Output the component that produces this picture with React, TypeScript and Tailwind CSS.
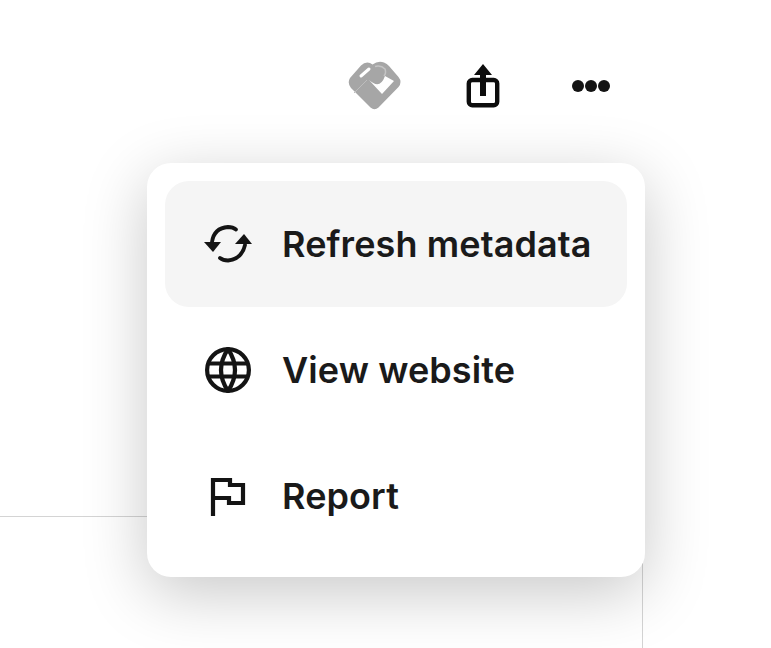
function Collection() {
  return (
    <svg width="54" height="50" viewBox="0 0 54 50" fill="none">
      <path
        d="M2 17 L13 4.5 Q17 0.5 22 2 L24.5 3.5 Q30 -0.5 36 1.5 Q39 2.5 41 5 L50.5 16 Q54.5 21 50.5 26 L30.5 46.5 Q26.5 50 22.5 46.5 L3 27 Q-1 22 2 17 Z"
        fill="#a6a6a6"
      />
      <path d="M13 15 L21 8" stroke="#ffffff" strokeWidth="3" strokeLinecap="round" />
      <path d="M21 19 Q32 29 37 15 L46 20 L34 33 Z" fill="#ffffff" />
      <path d="M27 5.5 Q33 4 37 8 Q38.5 12 36 15" stroke="#c4c4c4" strokeWidth="1.5" />
      <path d="M6 32 L19 19" stroke="#bdbdbd" strokeWidth="1" />
    </svg>
  );
}

function Share() {
  return (
    <svg width="34" height="44" viewBox="0 0 34 44" fill="none">
      <path d="M17 0 L26 11 L20 11 L20 32 L14 32 L14 11 L8 11 Z" fill="#0d0d0d" />
      <rect x="2.8" y="16" width="28.4" height="25.2" rx="3.5" stroke="#0d0d0d" strokeWidth="4.4" />
    </svg>
  );
}

function Refresh() {
  return (
    <svg width="48" height="38" viewBox="0 0 48 38" fill="none">
      <path d="M8 17 Q10 3 24 2 Q29 2 32 4.5" stroke="#141414" strokeWidth="3.8" strokeLinecap="round" />
      <path d="M41 20 Q38 34 24 35.5 Q19 35.5 16 33" stroke="#141414" strokeWidth="3.8" strokeLinecap="round" />
      <path d="M0 17 H17 L9 27 Z" fill="#141414" />
      <path d="M31 19 H48 L40 9 Z" fill="#141414" />
    </svg>
  );
}

function Globe() {
  return (
    <svg width="46" height="46" viewBox="0 0 46 46" fill="none" stroke="#141414" strokeWidth="4.2">
      <circle cx="23" cy="23" r="20.9" />
      <path d="M23 2 Q9 23 23 44 Q37 23 23 2 Z" />
      <path d="M4 16.5 H42 M4 29.5 H42" />
    </svg>
  );
}

function Flag() {
  return (
    <svg className="mt-[2px]" width="36" height="40" viewBox="0 0 36 40" fill="none">
      <path d="M3 39 V3 H20 V8 H33 V26 H19 V21 H3" stroke="#141414" strokeWidth="4.2" />
    </svg>
  );
}

const items = [
  { label: "Refresh metadata", icon: <Refresh />, active: true },
  { label: "View website", icon: <Globe />, active: false },
  { label: "Report", icon: <Flag />, active: false },
];

export default function App() {
  return (
    <div className="relative h-[648px] w-[771px] overflow-hidden bg-white font-['Inter',sans-serif]">
      <div className="mt-[61px] flex h-[50px] items-center justify-end pr-[126px]">
        <div className="flex w-[108px] justify-center"><Collection /></div>
        <div className="flex w-[108px] justify-center"><Share /></div>
        <div className="flex w-[108px] justify-center gap-px">
          <span className="size-[12px] rounded-full bg-[#141414]" />
          <span className="size-[12px] rounded-full bg-[#141414]" />
          <span className="size-[12px] rounded-full bg-[#141414]" />
        </div>
      </div>

      <div className="absolute left-0 top-[516px] h-[132px] w-[643px] border-r border-t border-[#d4d4d4]" />

      <div className="absolute left-[147px] top-[163px] w-[498px] rounded-[24px] bg-white p-[18px] shadow-[0_16px_64px_rgba(0,0,0,0.22)]">
        {items.map((item) => (
          <div
            key={item.label}
            className={`flex h-[126px] items-center rounded-[24px] ${item.active ? "bg-[#f5f5f5]" : ""}`}
          >
            <div className="flex w-[117px] items-center justify-center pl-[8px]">{item.icon}</div>
            <span className="text-[36px] font-semibold tracking-[0.1px] text-[#1a1a1a]">{item.label}</span>
          </div>
        ))}
      </div>
    </div>
  );
}
